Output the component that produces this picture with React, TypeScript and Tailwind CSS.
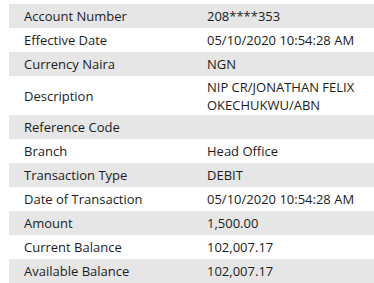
import React from "react";

const rows: { label: string; value: string[]; tall?: boolean }[] = [
  { label: "Account Number", value: ["208****353"] },
  { label: "Effective Date", value: ["05/10/2020 10:54:28 AM"] },
  { label: "Currency Naira", value: ["NGN"] },
  { label: "Description", value: ["NIP CR/JONATHAN FELIX", "OKECHUKWU/ABN"], tall: true },
  { label: "Reference Code", value: [""] },
  { label: "Branch", value: ["Head Office"] },
  { label: "Transaction Type", value: ["DEBIT"] },
  { label: "Date of Transaction", value: ["05/10/2020 10:54:28 AM"] },
  { label: "Amount", value: ["1,500.00"] },
  { label: "Current Balance", value: ["102,007.17"] },
  { label: "Available Balance", value: ["102,007.17"] },
];

export default function App() {
  return (
    <div
      className="w-[374px] h-[283px] bg-white pt-[4px] pl-[9px] overflow-hidden text-[#1c1c1c] text-[13px]"
      style={{ fontFamily: '"Open Sans", sans-serif' }}
    >
      {rows.map((r, i) => (
        <div
          key={r.label}
          className={`flex items-center ${r.tall ? "h-[39px]" : "h-[24px]"} ${i % 2 === 0 ? "bg-[#e6e6e6]" : "bg-white"}`}
        >
          <div className="w-[198px] pl-[15px] leading-[18px]">{r.label}</div>
          <div className="flex-1 leading-[18px]">
            {r.value.map((v, j) => (
              <div key={j}>{v}</div>
            ))}
          </div>
        </div>
      ))}
    </div>
  );
}
